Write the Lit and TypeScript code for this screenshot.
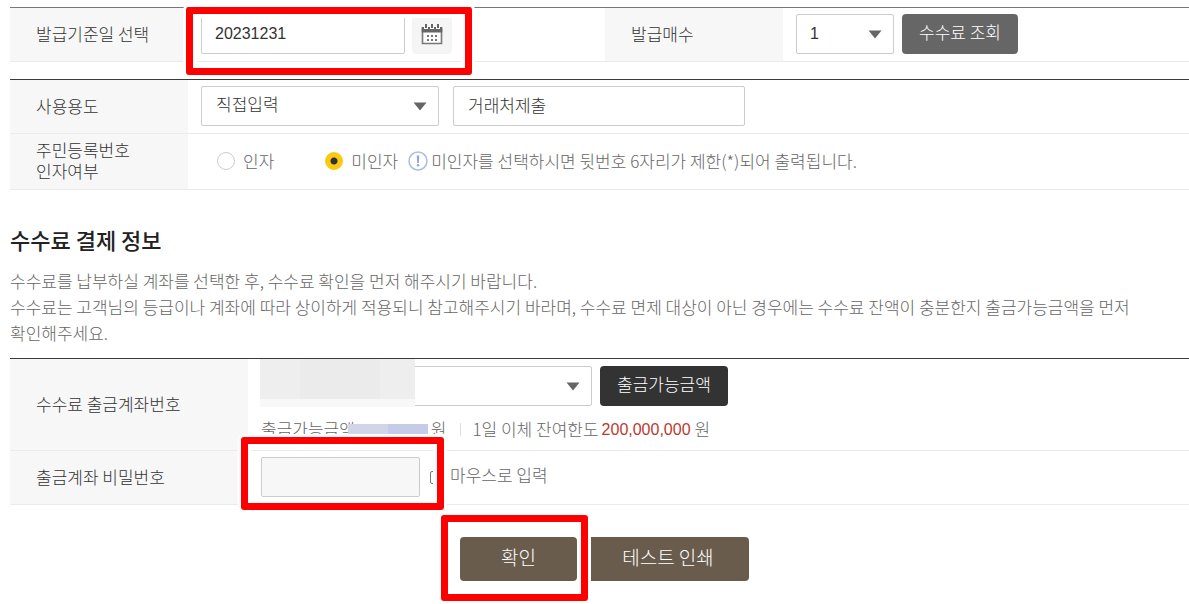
import { LitElement, html, css, svg } from "lit";
import { customElement, property, state } from "lit/decorators.js";

const arrow = html`<svg class="arrow" viewBox="0 0 14 9" width="14" height="9" aria-hidden="true">
  <path d="M0.5 0.5h13L7 8.6z" fill="#666" />
</svg>`;

const calendarDots = [6, 10, 14].flatMap((x) =>
  [11, 15].map((y) => svg`<rect x=${x} y=${y} width="2" height="2" fill="#777" />`)
);

/** Red frame that points out the step the customer has to complete. */
@customElement("step-mark")
export class StepMark extends LitElement {
  static styles = css`
    :host {
      position: relative;
      display: flex;
      align-items: center;
    }
    .frame {
      position: absolute;
      inset: var(--mark-inset, -7px);
      border: 7px solid #fe0000;
      border-radius: 3px;
      box-shadow: 0 0 0 3px #fff, inset 0 0 0 4px #fff;
      pointer-events: none;
    }
  `;
  render() {
    return html`<slot></slot><div class="frame"></div>`;
  }
}

@customElement("app-root")
export class AppRoot extends LitElement {
  @property() issueDate = "20231231";
  @state() printId = "no";

  static styles = css`
    :host {
      display: block;
      padding: 7px 0 4px 10px;
      background: #fff;
      color: #666;
      font: 300 17px/26px "Noto Sans CJK KR", "Noto Sans", sans-serif;
    }
    * {
      box-sizing: border-box;
    }
    input,
    select,
    button {
      font: inherit;
      margin: 0;
    }
    .group {
      border-top: 1px solid #3a3a3a;
    }
    .group.first {
      border-color: #777;
      margin-bottom: 17px;
    }
    .row {
      display: grid;
      grid-template-columns: 178px 1fr;
      border-bottom: 1px solid #ebebeb;
    }
    .row.split {
      grid-template-columns: 178px 417px 178px 1fr;
    }
    .pay .row {
      grid-template-columns: 238px 1fr;
    }
    .name {
      display: flex;
      align-items: center;
      padding: 0 0 3px 26px;
      background: #f7f7f7;
      color: #333;
      line-height: 21px;
    }
    .field {
      display: flex;
      align-items: center;
      padding: 6px 0 7px 13px;
    }
    .text,
    .choice select {
      height: 40px;
      width: 100%;
      border: 1px solid #ccc;
      border-radius: 2px;
      background: #fff;
      color: #333;
      padding: 0 14px 4px;
      outline: none;
      appearance: none;
    }
    .text.latin,
    .latin select {
      font-family: "Liberation Sans", sans-serif;
      font-size: 16px;
      padding: 0 13px 1px;
    }
    .choice {
      display: grid;
      align-items: center;
    }
    .choice > * {
      grid-area: 1 / 1;
    }
    .arrow {
      justify-self: end;
      margin-right: 12px;
      pointer-events: none;
    }
    .date {
      --mark-inset: -7px -20px -21px -15px;
    }
    .date .text {
      width: 204px;
    }
    .calendar {
      display: grid;
      place-items: center;
      width: 40px;
      height: 40px;
      margin-left: 7px;
      padding: 0;
      border: 0;
      border-radius: 4px;
      background: #f5f5f5;
    }
    .copies {
      width: 98px;
    }
    .action {
      height: 40px;
      padding: 0 17px 4px;
      margin-left: 8px;
      border: 0;
      border-radius: 4px;
      background: #666;
      color: #fff;
    }
    .action.dark {
      background: #333;
    }
    .purpose {
      width: 238px;
    }
    .target {
      width: 292px;
      margin-left: 14px;
    }
    .radios {
      padding: 14px 0 15px 29px;
    }
    .radios label {
      display: flex;
      align-items: center;
      gap: 8px;
    }
    .radios input {
      appearance: none;
      width: 18px;
      height: 18px;
      border: 1px solid #ccc;
      border-radius: 50%;
      background: #fff;
      flex: none;
    }
    .radios input:checked {
      border-color: #fbc90f;
      background: radial-gradient(circle, #333 0 3px, #fbc90f 4px);
    }
    .first-choice {
      margin-right: 51px;
    }
    .hint {
      display: flex;
      align-items: center;
      margin-left: 10px;
      gap: 3px;
    }
    h2 {
      margin: 34px 0 14px;
      color: #222;
      font-size: 22px;
      line-height: 30px;
      font-weight: 500;
    }
    .guide {
      margin: 0 24px 12px 0;
      word-break: keep-all;
    }
    .account {
      display: block;
      padding: 6px 0 7px 13px;
    }
    .line {
      display: flex;
      align-items: center;
    }
    .bank {
      width: 331px;
    }
    .hidden-account {
      align-self: start;
      width: 155px;
      height: 48px;
      margin: -6px 0 0 -1px;
      background: linear-gradient(#0000 40px, #f8f8f8 40px),
        linear-gradient(90deg, #efeeee 40px, #ebebeb 40px 120px, #eee 120px);
      z-index: 1;
    }
    .amount {
      margin-top: 8px;
    }
    .hidden-amount {
      width: 80px;
      height: 10px;
      margin: 0 3px 0 -7px;
      background: linear-gradient(90deg, #d0d6e7 40px, #c4cce7 40px);
      z-index: 1;
    }
    .bar {
      width: 1px;
      height: 13px;
      margin: 0 11px 0 14px;
      background: #ddd;
    }
    .limit {
      margin: 0 4px 0 3px;
      padding-top: 2px;
      color: #b83a30;
      font-family: "Liberation Sans", sans-serif;
      font-size: 16px;
    }
    .secret {
      --mark-inset: -20px -24px -13px -20px;
    }
    .secret .text {
      width: 159px;
      background: #f7f7f7;
    }
    .mouse {
      appearance: none;
      width: 13px;
      height: 13px;
      margin: 0 7px 0 10px;
      border: 1px solid #777;
      border-radius: 2px;
    }
    .mouse + label {
      padding-bottom: 4px;
    }
    .buttons {
      display: flex;
      margin: 32px 0 20px 450px;
      gap: 10px;
    }
    .buttons button {
      height: 44px;
      padding: 0 0 4px;
      border: 0;
      border-radius: 4px;
      background: #6a5c4d;
      color: #fff;
      font-size: 19px;
    }
    .confirm {
      --mark-inset: -22px -11px -20px -19px;
    }
    .buttons .ok {
      width: 117px;
    }
    .buttons .test {
      width: 162px;
    }
  `;

  render() {
    return html`
      <section class="group first">
        <div class="row split">
          <label class="name" for="date">발급기준일 선택</label>
          <div class="field">
            <step-mark class="date">
              <input class="text latin" id="date" .value=${this.issueDate} />
              <button class="calendar" aria-label="달력">
                <svg width="22" height="21" viewBox="0 0 22 21" aria-hidden="true">
                  <path d="M1.5 4v15.500h19V4" fill="#fff" stroke="#777" stroke-width="1.600" />
                  <path d="M.7 3h2.300v2h4V3h2v2h4V3h2v2h4V3h2.300v5.500H.7z" fill="#666" />
                  <path d="M5 0v4M11 0v4M17 0v4" stroke="#666" stroke-width="2" />
                  ${calendarDots}
                </svg>
              </button>
            </step-mark>
          </div>
          <label class="name" for="copies">발급매수</label>
          <div class="field">
            <div class="choice latin copies">
              <select id="copies"><option>1</option><option>2</option></select>
              ${arrow}
            </div>
            <button class="action">수수료 조회</button>
          </div>
        </div>
      </section>

      <section class="group">
        <div class="row">
          <label class="name" for="purpose">사용용도</label>
          <div class="field">
            <div class="choice purpose">
              <select id="purpose"><option>직접입력</option></select>
              ${arrow}
            </div>
            <input class="text target" aria-label="사용용도 직접입력" value="거래처제출" />
          </div>
        </div>
        <div class="row">
          <div class="name">주민등록번호<br />인자여부</div>
          <div class="field radios">
            <label class="first-choice">
              <input type="radio" name="rrn" ?checked=${this.printId === "yes"} @change=${() => (this.printId = "yes")} />인자
            </label>
            <label>
              <input type="radio" name="rrn" ?checked=${this.printId === "no"} @change=${() => (this.printId = "no")} />미인자
            </label>
            <span class="hint">
              <svg width="20" height="20" viewBox="0 0 20 20" aria-hidden="true">
                <circle cx="10" cy="10" r="9" fill="#fff" stroke="#a9bde8" stroke-width="1.500" />
                <path d="M8.700 4.500h2.600l-.5 7.500H9.200z" fill="#8fa8e0" />
                <circle cx="10" cy="14.200" r="1.200" fill="#8fa8e0" />
              </svg>
              미인자를 선택하시면 뒷번호 6자리가 제한(*)되어 출력됩니다.
            </span>
          </div>
        </div>
      </section>

      <h2>수수료 결제 정보</h2>
      <p class="guide">
        수수료를 납부하실 계좌를 선택한 후, 수수료 확인을 먼저 해주시기 바랍니다.<br />
        수수료는 고객님의 등급이나 계좌에 따라 상이하게 적용되니 참고해주시기 바라며, 수수료 면제 대상이 아닌 경우에는 수수료 잔액이 충분한지 출금가능금액을 먼저 확인해주세요.
      </p>

      <section class="group pay">
        <div class="row">
          <label class="name" for="bank">수수료 출금계좌번호</label>
          <div class="field account">
            <div class="line">
              <div class="choice bank">
                <select id="bank"></select>
                <span class="hidden-account"></span>
                ${arrow}
              </div>
              <button class="action dark">출금가능금액</button>
            </div>
            <div class="line amount">
              출금가능금액<span class="hidden-amount"></span>원<span class="bar"></span>1일 이체 잔여한도
              <span class="limit">200,000,000</span>원
            </div>
          </div>
        </div>
        <div class="row">
          <label class="name" for="secret">출금계좌 비밀번호</label>
          <div class="field">
            <step-mark class="secret">
              <input class="text" id="secret" type="password" />
            </step-mark>
            <input class="mouse" id="mouse" type="checkbox" />
            <label for="mouse">마우스로 입력</label>
          </div>
        </div>
      </section>

      <div class="buttons">
        <step-mark class="confirm"><button class="ok">확인</button></step-mark>
        <button class="test">테스트 인쇄</button>
      </div>
    `;
  }
}
